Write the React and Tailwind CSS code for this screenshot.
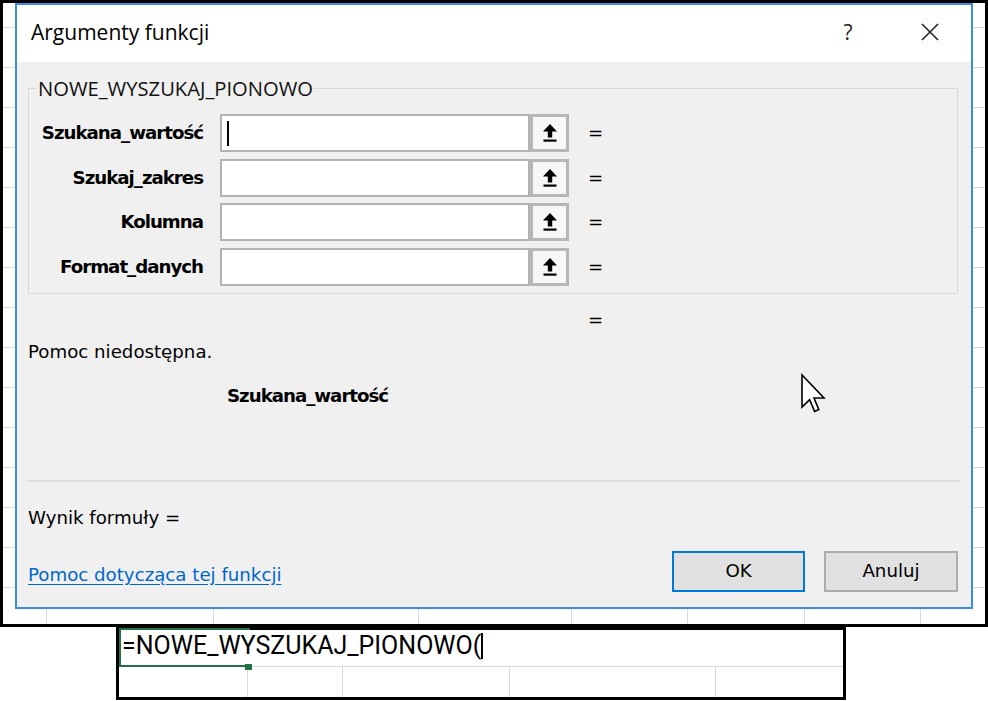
import React from 'react'

const body = "font-['DejaVu_Sans',sans-serif]"
const ui = "font-['Open_Sans',sans-serif]"

const args = ['Szukana_wartość', 'Szukaj_zakres', 'Kolumna', 'Format_danych']
const stripRows = [25, 40, 40, 40, 40, 40, 40, 40, 40, 40, 40, 40, 40, 40, 40, 21]
const bottomCols = [44, 167, 205, 153, 116, 117, 116]

function UpArrow() {
  return (
    <svg width="16" height="20" viewBox="0 0 16 20">
      <path d="M8 1 L15 8.5 L10.2 8.5 L10.2 14.5 L5.8 14.5 L5.8 8.5 L1 8.5 Z" fill="#000" />
      <rect x="1.5" y="16.5" width="13" height="2.2" fill="#000" />
    </svg>
  )
}

function Pointer() {
  return (
    <svg width="26" height="44" viewBox="0 0 13 22">
      <path
        d="M1 1 L1 17 L4.8 13.3 L7.3 19.2 L9.4 18.3 L7 12.5 L12 12.5 Z"
        fill="#fff"
        stroke="#000"
        strokeWidth="0.8"
        strokeLinejoin="miter"
      />
    </svg>
  )
}

function Strip() {
  return (
    <div className="flex w-[12px] flex-col bg-white">
      {stripRows.map((h, i) => (
        <div
          key={i}
          className={i < stripRows.length - 1 ? 'border-b border-[#d9d9d9]' : ''}
          style={{ height: h }}
        />
      ))}
    </div>
  )
}

function ArgRow({ label, focused }) {
  return (
    <div className="flex h-[38px] items-center">
      <div className="w-[174px] text-right text-[18.2px] font-bold leading-[22px] tracking-[-1px] text-black">
        {label}
      </div>
      <div className="ml-[17px] flex h-full w-[310px] items-center border-2 border-[#b3b3b3] bg-white">
        {focused && <div className="ml-[5px] h-[25px] w-[2px] bg-black" />}
      </div>
      <div className="flex h-full w-[39px] items-center justify-center border-[3px] border-[#b7b7b7] bg-[#f7f7f7]">
        <UpArrow />
      </div>
      <div className="ml-[19px] text-[18.2px] leading-[22px]">=</div>
    </div>
  )
}

function Dialog() {
  return (
    <div className="flex h-[606px] w-[958px] flex-col border-2 border-[#3b8fe0] bg-white">
      <div className="flex h-[57px] items-center pb-[4px] pl-[14px] pr-[32px]">
        <div className={`${ui} text-[21px] leading-[28px] text-black`}>Argumenty funkcji</div>
        <div className={`${ui} ml-auto w-[20px] text-center text-[21px] leading-[28px] text-[#222]`}>?</div>
        <svg className="ml-[63px]" width="18" height="18" viewBox="0 0 18 18">
          <path d="M1 1 L17 17 M17 1 L1 17" stroke="#222" strokeWidth="1.6" />
        </svg>
      </div>

      <div className={`${body} relative flex flex-1 flex-col bg-[#f0f0f0] px-[11px] text-black`}>
        <fieldset className="mr-[2px] mt-[13px] border border-[#d9d9d9] pb-[7px]">
          <legend className={`${ui} ml-[8px] px-[1px] text-[20.2px] leading-[26px] text-[#111]`}>
            NOWE_WYSZUKAJ_PIONOWO
          </legend>
          <div className="flex flex-col gap-[6.5px] pt-[13px]">
            {args.map((a, i) => (
              <ArgRow key={a} label={a} focused={i === 0} />
            ))}
          </div>
        </fieldset>

        <div className="ml-[560px] mt-[15px] text-[18.2px] leading-[22px]">=</div>
        <div className="mt-[10px] text-[18.2px] leading-[22px]">Pomoc niedostępna.</div>
        <div className="ml-[199px] mt-[22px] text-[18.2px] font-bold leading-[22px] tracking-[-1px]">
          Szukana_wartość
        </div>

        <div className="mt-[73px] h-[2px] bg-[#dedede]" />

        <div className="mt-[25px] text-[18.2px] leading-[22px]">Wynik formuły =</div>

        <div className="mt-[22px] flex items-start">
          <a className="mt-[13px] text-[18.2px] leading-[22px] text-[#0066cc] underline underline-offset-[3px]">
            Pomoc dotycząca tej funkcji
          </a>
          <button className="ml-auto flex h-[41px] w-[133px] items-center justify-center border-2 border-[#0078d7] bg-[#e1e1e1] text-[18.2px] leading-[22px]">
            OK
          </button>
          <button className="ml-[19px] mr-[2px] flex h-[41px] w-[134px] items-center justify-center border-2 border-[#adadad] bg-[#e1e1e1] text-[18.2px] leading-[22px]">
            Anuluj
          </button>
        </div>

        <div className="absolute left-[783px] top-[311px]">
          <Pointer />
        </div>
      </div>
    </div>
  )
}

function FormulaCell() {
  return (
    <div className="ml-[116px] flex h-[73px] w-[730px] flex-col border-[3px] border-black bg-white">
      <div className="relative flex h-[37px] items-center border-b border-[#d9d9d9]">
        <div className="absolute left-0 top-[-2px] h-[39px] w-[131px] border-2 border-r-0 border-[#217346]" />
        <div className="absolute left-[126px] top-[34px] h-[6px] w-[7px] bg-[#217346]" />
        <span className="relative pl-[3px] pb-[4px] font-['Roboto',sans-serif] text-[25px] leading-[30px] text-black">
          =NOWE_WYSZUKAJ_PIONOWO(
        </span>
        <span className="relative mb-[4px] h-[26px] w-[1.5px] bg-black" />
      </div>
      <div className="flex flex-1">
        <div className="w-[129px] border-r border-[#d9d9d9]" />
        <div className="w-[95px] border-r border-[#d9d9d9]" />
        <div className="w-[167px] border-r border-[#d9d9d9]" />
        <div className="w-[206px] border-r border-[#d9d9d9]" />
        <div className="flex-1" />
      </div>
    </div>
  )
}

export default function App() {
  return (
    <div className="min-h-[701px] w-[988px] bg-white">
      <div className="flex h-[627px] w-[988px] flex-col border-[3px] border-black bg-white">
        <div className="flex h-[606px]">
          <Strip />
          <Dialog />
          <Strip />
        </div>
        <div className="flex h-[15px]">
          {bottomCols.map((w, i) => (
            <div key={i} className="border-r border-[#d9d9d9]" style={{ width: w }} />
          ))}
          <div className="flex-1" />
        </div>
      </div>
      <FormulaCell />
    </div>
  )
}
